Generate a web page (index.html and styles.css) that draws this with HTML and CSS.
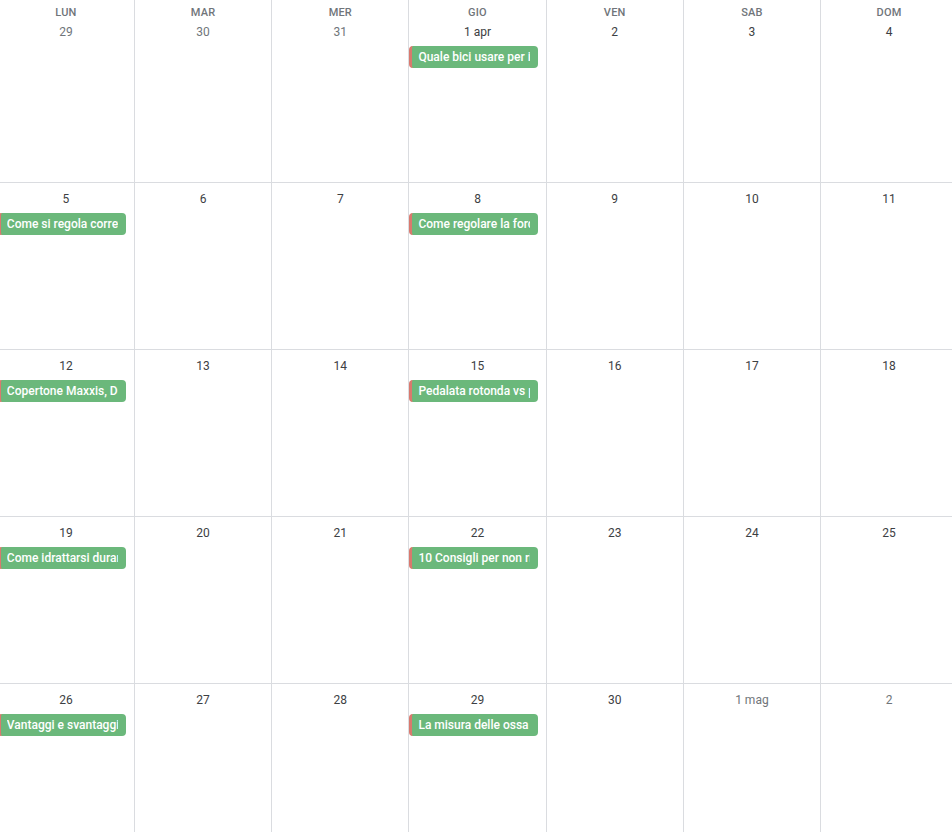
FILE: index.html
```html
<!DOCTYPE html>
<html lang="it">
<head>
<meta charset="utf-8">
<title>Calendario</title>
<link rel="stylesheet" href="styles.css">
</head>
<body>
<div class="month">
  <div class="cell first"><div class="dow">LUN</div><div class="date other">29</div></div>
  <div class="cell first"><div class="dow">MAR</div><div class="date other">30</div></div>
  <div class="cell first"><div class="dow">MER</div><div class="date other">31</div></div>
  <div class="cell first"><div class="dow">GIO</div><div class="date">1 apr</div><div class="chip"><div class="chip-text">Quale bici usare per iniziare</div></div></div>
  <div class="cell first"><div class="dow">VEN</div><div class="date">2</div></div>
  <div class="cell first"><div class="dow">SAB</div><div class="date">3</div></div>
  <div class="cell first"><div class="dow">DOM</div><div class="date">4</div></div>

  <div class="cell"><div class="date">5</div><div class="chip"><div class="chip-text">Come si regola correttamente la sella</div></div></div>
  <div class="cell"><div class="date">6</div></div>
  <div class="cell"><div class="date">7</div></div>
  <div class="cell"><div class="date">8</div><div class="chip"><div class="chip-text">Come regolare la forcella</div></div></div>
  <div class="cell"><div class="date">9</div></div>
  <div class="cell"><div class="date">10</div></div>
  <div class="cell"><div class="date">11</div></div>

  <div class="cell"><div class="date">12</div><div class="chip"><div class="chip-text">Copertone Maxxis, Dissector</div></div></div>
  <div class="cell"><div class="date">13</div></div>
  <div class="cell"><div class="date">14</div></div>
  <div class="cell"><div class="date">15</div><div class="chip"><div class="chip-text">Pedalata rotonda vs pedalata</div></div></div>
  <div class="cell"><div class="date">16</div></div>
  <div class="cell"><div class="date">17</div></div>
  <div class="cell"><div class="date">18</div></div>

  <div class="cell"><div class="date">19</div><div class="chip"><div class="chip-text">Come idrattarsi durante</div></div></div>
  <div class="cell"><div class="date">20</div></div>
  <div class="cell"><div class="date">21</div></div>
  <div class="cell"><div class="date">22</div><div class="chip"><div class="chip-text">10 Consigli per non rimanere</div></div></div>
  <div class="cell"><div class="date">23</div></div>
  <div class="cell"><div class="date">24</div></div>
  <div class="cell"><div class="date">25</div></div>

  <div class="cell"><div class="date">26</div><div class="chip"><div class="chip-text">Vantaggi e svantaggi del</div></div></div>
  <div class="cell"><div class="date">27</div></div>
  <div class="cell"><div class="date">28</div></div>
  <div class="cell"><div class="date">29</div><div class="chip"><div class="chip-text">La misura delle ossa ischiatiche</div></div></div>
  <div class="cell"><div class="date">30</div></div>
  <div class="cell"><div class="date other">1 mag</div></div>
  <div class="cell"><div class="date other">2</div></div>
</div>
</body>
</html>
```

FILE: styles.css
```css
html, body {
  margin: 0;
  padding: 0;
  background: #ffffff;
  overflow: hidden;
  height: 832px;
}

body {
  font-family: Roboto, "Liberation Sans", Arial, sans-serif;
  color: #3c4043;
}

.month {
  width: 960.4px;
  margin-left: -2.2px;
  display: grid;
  grid-template-columns: repeat(7, 1fr);
  grid-template-rows: 183px repeat(4, 167px);
}

.cell {
  border-right: 1px solid #dadce0;
  border-bottom: 1px solid #dadce0;
  display: flex;
  flex-direction: column;
  min-width: 0;
}

.dow {
  padding-top: 5px;
  height: 16px;
  line-height: 16px;
  font-size: 11px;
  font-weight: 500;
  color: #70757a;
  text-align: center;
  letter-spacing: 0.2px;
}

.date {
  margin-top: 6px;
  height: 20px;
  line-height: 20px;
  font-size: 12px;
  font-weight: 400;
  text-align: center;
  color: #3c4043;
}

.first .date {
  margin-top: 1px;
}

.date.other {
  color: #70757a;
}

.chip {
  margin-top: 4px;
  margin-right: 8px;
  height: 22px;
  background: #6bb87b;
  border-left: 3px solid #d9796e;
  border-radius: 4px;
  padding: 0 8px 0 6px;
  box-sizing: border-box;
}

.chip-text {
  overflow: hidden;
  white-space: nowrap;
  color: #ffffff;
  font-size: 12px;
  font-weight: 500;
  line-height: 22px;
}
```
